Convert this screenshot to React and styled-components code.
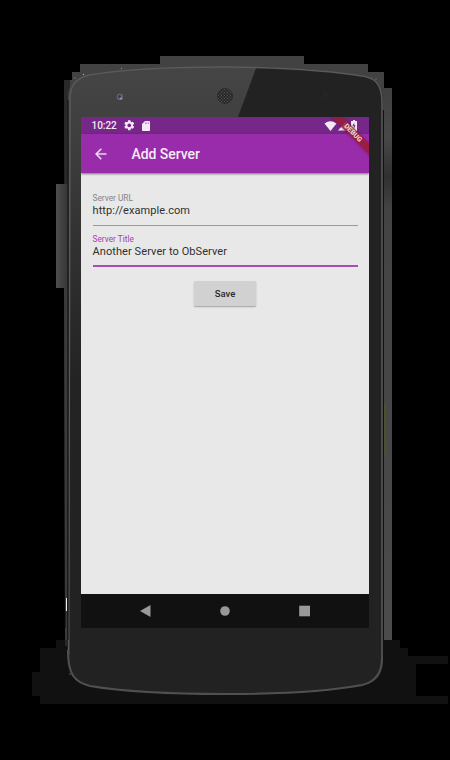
import React from "react";
import styled, { createGlobalStyle } from "styled-components";

const GlobalStyle = createGlobalStyle`
  * { box-sizing: border-box; }
  body { margin: 0; background: #000; }
`;

const Stage = styled.main`
  position: relative;
  width: 450px;
  height: 760px;
  overflow: hidden;
  background: #000;
  padding: 117px 81px 132px;
  font-family: Roboto, sans-serif;
`;

const DeviceArt = styled.svg`
  position: absolute;
  inset: 0;
  width: 450px;
  height: 760px;
`;

const Screen = styled.section`
  position: relative;
  display: flex;
  flex-direction: column;
  width: 288px;
  height: 511px;
  overflow: hidden;
  background: #e8e8e8;
`;

const StatusBar = styled.div`
  display: flex;
  align-items: center;
  flex: 0 0 17px;
  padding: 0 12px 0 10.5px;
  background: #762788;
  color: #f3eaf5;
`;

const Clock = styled.span`
  width: 31.5px;
  font-size: 10px;
  font-weight: 500;
  line-height: 17px;
  letter-spacing: -0.03px;
`;

const Icon = styled.svg`
  display: block;
  flex: none;
  width: ${(p) => p.$w}px;
  height: ${(p) => p.$h || p.$w}px;
  margin-left: ${(p) => p.$ml || 0}px;
`;

const StatusRight = styled.div`
  display: flex;
  align-items: center;
  margin-left: auto;
`;

const AppBar = styled.header`
  position: relative;
  display: flex;
  align-items: center;
  flex: 0 0 39px;
  padding-left: 13px;
  background: #992caa;
  box-shadow: 0 1px 2px rgba(0, 0, 0, 0.5);
  color: #f6ebf7;
`;

const Title = styled.h1`
  margin: 0 0 0 23.5px;
  font-size: 14px;
  font-weight: 500;
  line-height: 20px;
  letter-spacing: -0.06px;
`;

const Form = styled.form`
  display: flex;
  flex: 1;
  flex-direction: column;
  align-items: stretch;
  padding: 19px 11.5px 0;
`;

const Field = styled.label`
  display: flex;
  flex-direction: column;
  height: ${(p) => (p.$active ? 41 : 34)}px;
  border-bottom: ${(p) => (p.$active ? "2px solid #ab4bb9" : "1px solid #999")};
  padding-top: ${(p) => (p.$active ? 7 : 0)}px;
`;

const FieldLabel = styled.span`
  height: 12px;
  font-size: 8.3px;
  line-height: 12px;
  color: ${(p) => (p.$active ? "#a43eb4" : "#858585")};
`;

const FieldValue = styled.span`
  height: 13px;
  font-size: 11px;
  line-height: 13px;
  letter-spacing: 0.08px;
  color: #303030;
`;

const SaveButton = styled.button`
  align-self: center;
  width: 62px;
  height: 25px;
  margin-top: 14px;
  padding: 0;
  border: 0;
  border-radius: 1px;
  background: #d1d1d1;
  box-shadow: 0 1px 1.5px rgba(0, 0, 0, 0.3);
  font: 500 9.5px/25px Roboto, sans-serif;
  color: #292929;
`;

const NavBar = styled.nav`
  display: flex;
  align-items: center;
  flex: 0 0 34px;
  background: #111;
  padding: 0 58px;
  justify-content: space-between;
`;

const Ribbon = styled.div`
  position: absolute;
  top: 11.5px;
  right: -21px;
  width: 74px;
  height: 8px;
  transform: rotate(45deg);
  background: rgba(154, 28, 53, 0.88);
  box-shadow: 0 0 3px rgba(70, 0, 50, 0.35);
  color: #e5cfc7;
  font-size: 7px;
  font-weight: 900;
  line-height: 8px;
  text-align: center;
`;

function Device() {
  return (
    <DeviceArt viewBox="0 0 450 760" aria-hidden="true">
      <defs>
        <linearGradient id="bezel" x1="0" y1="66" x2="0" y2="694" gradientUnits="userSpaceOnUse">
          <stop offset="0" stopColor="#454545" />
          <stop offset=".09" stopColor="#404040" />
          <stop offset=".3" stopColor="#303030" />
          <stop offset=".5" stopColor="#232323" />
          <stop offset="1" stopColor="#222" />
        </linearGradient>
        <linearGradient id="side" x1="0" y1="88" x2="0" y2="640" gradientUnits="userSpaceOnUse">
          <stop offset="0" stopColor="#404040" />
          <stop offset=".09" stopColor="#484848" />
          <stop offset=".16" stopColor="#303030" />
          <stop offset=".22" stopColor="#434343" />
          <stop offset="1" stopColor="#4b4b4b" />
        </linearGradient>
        <linearGradient id="key" x1="56" y1="0" x2="68" y2="0" gradientUnits="userSpaceOnUse">
          <stop offset="0" stopColor="#4e4e4e" />
          <stop offset="1" stopColor="#353535" />
        </linearGradient>
        <clipPath id="body">
          <path d="M68 100C68 84 73 79 89 75C125 68 180 66.500 225 66.500C285 67 335 71 365 76C378 79 383 86 383 103V660C383 675 377 682 362 686C325 692 280 695 225 695C170 694 120 691 90 686C74 682 67 674 67 655Z" />
        </clipPath>
        <pattern id="mesh" width="3" height="3" patternUnits="userSpaceOnUse">
          <rect width="3" height="3" fill="#242424" />
          <circle cx="1" cy="1" r=".65" fill="#555" />
          <circle cx="2.500" cy="2.500" r=".65" fill="#555" />
        </pattern>
      </defs>
      <path fill="#424242" d="M160 56H304V64H368V72H384V100H64V80H72V72H80V64H160Z" />
      <path fill="#111" d="M56 640H400V648H408V656H448V664H416V696H448V704H40V696H32V672H40V648H56Z" />
      <path fill="url(#side)" d="M382 88H392V640H382Z" />
      <path fill="#292929" d="M64 80H70V646H65Z" />
      <path fill="url(#key)" d="M56 184H68V288H56Z" />
      <path fill="#3a3a3a" d="M64 288H68V640H65Z" />
      <path d="M384.500 404V456" stroke="#4e4f2d" strokeWidth="3" />
      <path d="M66.500 598V611" stroke="#eee" strokeWidth="1" />
      <path d="M65.500 611V628" stroke="#39121d" strokeWidth="1" />
      <g clipPath="url(#body)">
        <rect x="64" y="60" width="322" height="640" fill="url(#bezel)" />
        <path fill="#222" d="M259 60H390V700H369V117H238Z" />
      </g>
      <path fill="none" stroke="#5a5a5a" strokeWidth="1.500" d="M68.700 655L70 100C70 85 75 79 89 75C125 69 180 67 225 67C285 67.500 335 71.500 365 76.500C377 79 382 86 382 103V660" />
      <path fill="none" stroke="#505050" strokeWidth="2" d="M68 650C68 674 74 682 90 686C120 691 170 694 225 694C280 694 325 692 362 685C375 682 382 674 382 658" />
      <path fill="none" stroke="#111" strokeWidth="1" d="M68 100V640M383.500 110V640" />
      <circle cx="120" cy="97" r="3.200" fill="#66646f" />
      <circle cx="119.500" cy="96.500" r="1.500" fill="#36346a" />
      <circle cx="121" cy="98.500" r="1" fill="#a0a0a6" />
      <circle cx="225" cy="96" r="7.500" fill="url(#mesh)" stroke="#2d2d2d" />
      <circle cx="325" cy="95" r="3" fill="#252525" />
      <g fill="#aaa">
        <circle cx="121.500" cy="68.500" r=".7" fill="#77f" />
        <circle cx="83.500" cy="74.500" r=".7" />
        <circle cx="75" cy="78" r=".6" />
        <circle cx="376" cy="79" r=".5" />
        <circle cx="70" cy="674" r=".6" />
      </g>
    </DeviceArt>
  );
}

export default function App() {
  return (
    <>
      <GlobalStyle />
      <Stage>
        <Device />
        <Screen>
          <StatusBar>
            <Clock>10:22</Clock>
            <Icon $w={12.5} viewBox="0 0 24 24" fill="currentColor">
              <path d="M19.140 12.940c.04-.3.060-.61.060-.94s-.02-.64-.07-.94l2.030-1.580a.5.5 0 0 0 .12-.61l-1.920-3.320a.5.5 0 0 0-.59-.22l-2.390.96c-.5-.38-1.030-.7-1.620-.94L14.400 2.810a.5.500 0 0 0-.48-.41h-3.840a.5.500 0 0 0-.47.41l-.36 2.540c-.59.24-1.130.57-1.620.94l-2.390-.96a.5.500 0 0 0-.59.22L2.740 8.870a.5.500 0 0 0 .12.61l2.030 1.580a7 7 0 0 0 0 1.880l-2.030 1.580a.5.500 0 0 0-.12.61l1.920 3.320c.12.220.370.290.590.220l2.390-.96c.5.380 1.030.7 1.620.94l.36 2.540c.05.240.240.410.480.410h3.840c.24 0 .44-.17.470-.41l.36-2.540c.59-.24 1.130-.56 1.620-.94l2.390.96c.22.080.470 0 .59-.22l1.920-3.320a.5.500 0 0 0-.12-.61ZM12 15.600A3.600 3.600 0 1 1 12 8.400a3.600 3.600 0 0 1 0 7.200Z" />
            </Icon>
            <Icon $w={12} $ml={4.5} viewBox="0 0 24 24" fill="currentColor">
              <path fillRule="evenodd" d="M18 2h-8L4 8v12c0 1.100.9 2 2 2h12c1.100 0 2-.9 2-2V4c0-1.100-.9-2-2-2ZM10 5h1.200v2.500H10Zm3 0h1.200v2.500H13Zm3 0h1.200v2.500H16Z" />
            </Icon>
            <StatusRight>
              <Icon $w={13} $h={12} viewBox="0 0 13 12" fill="currentColor">
                <path d="M.5 3.500Q6.500-1.200 12.500 3.500L6.500 11Z" />
              </Icon>
              <Icon $w={9} $h={11} $ml={1} viewBox="0 0 9 11" fill="currentColor">
                <path d="M8.500 1V10.500H0Z" />
              </Icon>
              <Icon $w={6} $h={11} $ml={4.5} viewBox="0 0 6 11">
                <path fill="currentColor" d="M2 0H4V1H6V11H0V1H2Z" />
                <path fill="#762788" d="M3.300 2.500L1.500 6H2.800V9L4.600 5.200H3.300Z" />
              </Icon>
            </StatusRight>
          </StatusBar>
          <AppBar>
            <Icon $w={14} viewBox="0 0 24 24" fill="currentColor" stroke="currentColor" strokeWidth=".6">
              <path d="M21 11H6L13 4L11.600 2.600L2.200 12L11.600 21.400L13 20L6 13H21Z" />
            </Icon>
            <Title>Add Server</Title>
          </AppBar>
          <Form onSubmit={(e) => e.preventDefault()}>
            <Field>
              <FieldLabel>Server URL</FieldLabel>
              <FieldValue>http://example.com</FieldValue>
            </Field>
            <Field $active>
              <FieldLabel $active>Server Title</FieldLabel>
              <FieldValue>Another Server to ObServer</FieldValue>
            </Field>
            <SaveButton>Save</SaveButton>
          </Form>
          <NavBar>
            <Icon $w={12} viewBox="0 0 12 12" fill="#999">
              <path d="M1 6L11.500 0V12Z" />
            </Icon>
            <Icon $w={10} viewBox="0 0 10 10" fill="#999">
              <circle cx="5" cy="5" r="4.800" />
            </Icon>
            <Icon $w={12} viewBox="0 0 12 12" fill="#999">
              <rect x=".2" y=".7" width="10.800" height="10.600" />
            </Icon>
          </NavBar>
          <Ribbon>DEBUG</Ribbon>
        </Screen>
      </Stage>
    </>
  );
}
